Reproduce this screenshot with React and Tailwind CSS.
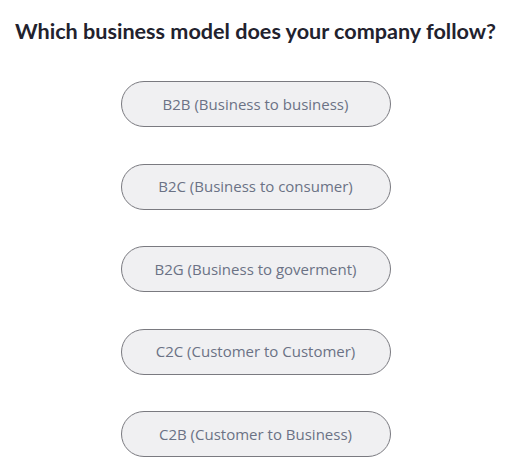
import React from "react";

const options = [
  "B2B (Business to business)",
  "B2C (Business to consumer)",
  "B2G (Business to goverment)",
  "C2C (Customer to Customer)",
  "C2B (Customer to Business)",
];

export default function App() {
  return (
    <div className="w-[515px] h-[476px] bg-white flex flex-col items-center pt-[17px] pr-[4px]">
      <h1 className="text-[21.6px] leading-[28px] font-bold text-[#22222e] font-['Lato',sans-serif] text-center">
        Which business model does your company follow?
      </h1>
      <div className="flex flex-col items-center gap-[36.5px] mt-[36px]">
        {options.map((o) => (
          <button
            key={o}
            className="w-[270px] h-[46px] rounded-full border border-[#7a7a80] bg-[#f0f0f2] text-[15px] text-[#6b7285] font-['Open_Sans',sans-serif]"
          >
            {o}
          </button>
        ))}
      </div>
    </div>
  );
}
